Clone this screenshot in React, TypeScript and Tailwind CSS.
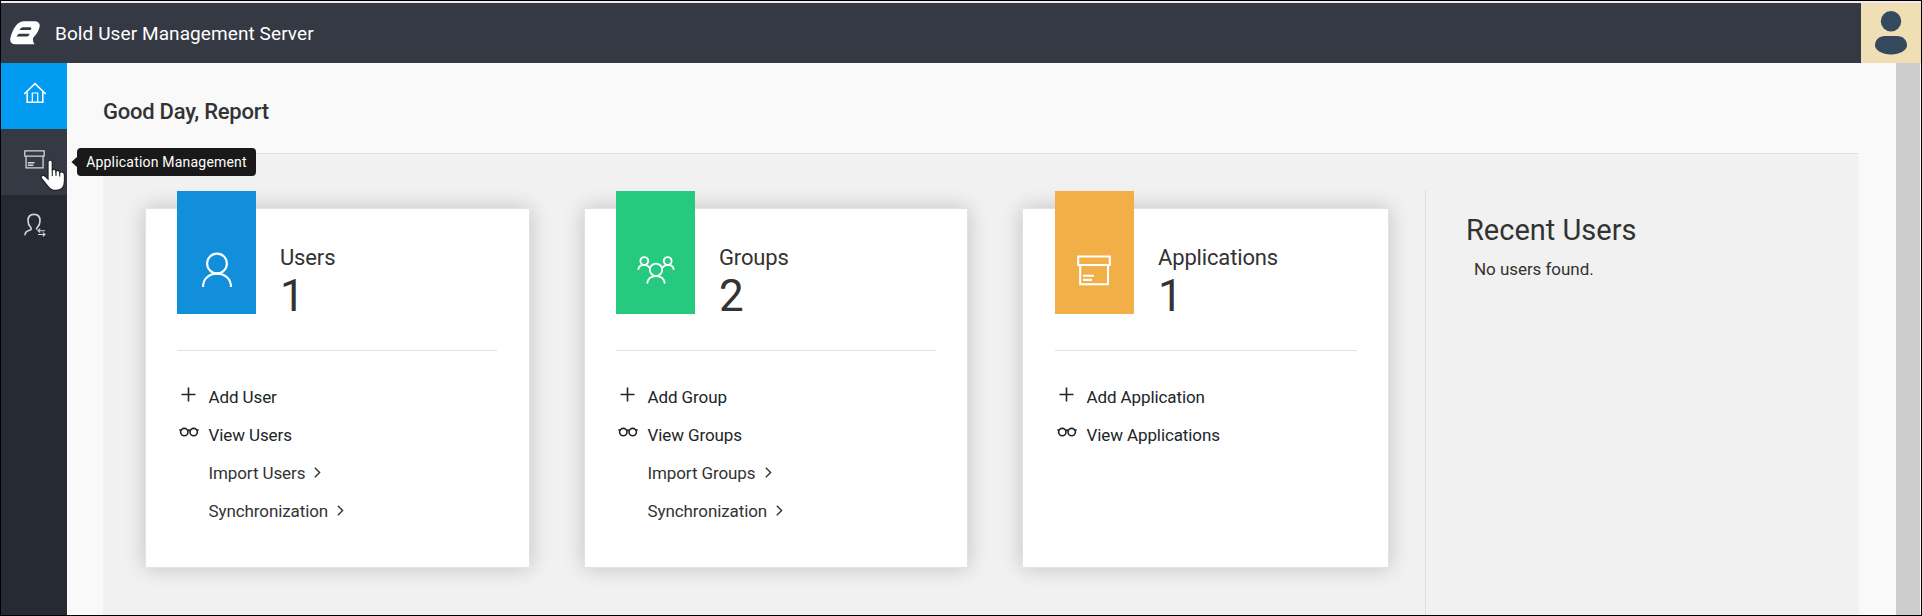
import React from "react";

type Link = { label: string; icon?: "plus" | "view"; arrow?: boolean };

const LogoIcon = () => (
  <svg className="ml-[9px]" width="30" height="24" viewBox="0 0 30 24">
    <path d="M13.5 0.3H24.5C28.6 0.3 30.6 2.8 29.4 6.6 28.4 10.2 26.6 13.6 23.4 16.4 22.6 18.6 23 21 24.6 23.2H5.5C1 23.2-0.6 20.4 0.6 16.2 2.6 8.8 7 0.3 13.5 0.3Z" fill="#fff" />
    <path d="M12.4 6.2H20.2Q21.9 6.2 21.2 7.8L20.7 8.9H9.4Q10.6 6.9 12.4 6.2ZM9 12.8H19.6Q18.9 15.3 17.2 15.5H6.6Q7.4 13.6 9 12.8Z" fill="#353943" />
  </svg>
);

const HomeIcon = () => (
  <svg width="24" height="22" viewBox="0 0 24 22" fill="none" stroke="#fff" strokeWidth="1.6">
    <path d="M1.2 12 12 1.6 22.8 12" />
    <path d="M4.2 9.8V20.2H19.8V9.8" />
    <path d="M9.3 20V11H14.7V20" strokeWidth="1.2" />
  </svg>
);

const BoxIcon = ({ className, stroke }: { className: string; stroke: string }) => (
  <svg className={className} viewBox="0 0 34 31" fill="none" stroke={stroke} strokeWidth="2.1">
    <path d="M1.2 1.5H32.8V10H1.2Z" />
    <path d="M3.2 10V29.2H31V10" />
    <path d="M6 20.8H17M6 24.9H15" />
  </svg>
);

const UserSyncIcon = () => (
  <svg width="22" height="24" viewBox="0 0 22 24" fill="none" stroke="#d6d6d6" strokeWidth="1.6">
    <path d="M1 22.3C1.2 18.8 2.8 18.3 5.6 17.2 7.5 16.4 7.7 15.5 6.6 14.3 4.8 12.4 4 10.3 4 7.8 4 3.6 6.3 1.4 10 1.4S16 3.6 16 7.8C16 10.8 15.1 12.6 13.5 14.3 12.4 15.5 12.4 16 13.2 16.7" />
    <path d="M21 17.7H14M16.2 15.7 14 17.7 16.2 19.6M14 21.5H21M18.8 19.6 21 21.5 18.8 23.4" strokeWidth="1.1" />
  </svg>
);

const UserIcon = () => (
  <svg width="32" height="36" viewBox="0 0 32 36" fill="none" stroke="#fff" strokeWidth="2.1">
    <circle cx="16" cy="11.5" r="9.9" />
    <path d="M2 35C2 27 8 21.6 16 21.6S30 27 30 35" />
  </svg>
);

const GroupIcon = () => (
  <svg width="38" height="28" viewBox="0 0 38 28" fill="none" stroke="#fff" strokeWidth="1.9">
    <circle cx="7.3" cy="5" r="3.9" />
    <circle cx="30.7" cy="5" r="3.9" />
    <circle cx="19" cy="13.8" r="6.2" />
    <path d="M1.3 13.8C1.5 10.7 3.8 8.9 7.1 8.9 9.8 8.9 11.7 10 12.8 12" />
    <path d="M36.7 13.8C36.5 10.7 34.2 8.9 30.9 8.9 28.2 8.9 26.3 10 25.2 12" />
    <path d="M10.2 27.6C10.5 22.8 14 20 19 20S27.5 22.8 27.8 27.6" />
  </svg>
);

const PlusIcon = () => (
  <svg width="15" height="15" viewBox="0 0 15 15" stroke="#212529" strokeWidth="1.6">
    <path d="M7.5 0.5V14.5M0.5 7.5H14.5" />
  </svg>
);

const GlassesIcon = () => (
  <svg width="20" height="10" viewBox="0 0 20 10" fill="none" stroke="#212529" strokeWidth="1.6">
    <circle cx="5.3" cy="5.1" r="3.7" />
    <circle cx="14.7" cy="5.1" r="3.7" />
    <path d="M0.3 3H2.4M17.6 3H19.7M8.4 3.6Q10 2.5 11.6 3.6" />
  </svg>
);

const ChevronIcon = () => (
  <svg width="7" height="11" viewBox="0 0 7 11" fill="none" stroke="#333" strokeWidth="1.4">
    <path d="M0.8 0.8 5.6 5.5 0.8 10.2" />
  </svg>
);

function Card({
  width, color, pad, title, count, icon, links,
}: {
  width: string; color: string; pad: string; title: string; count: string; icon: React.ReactNode; links: Link[];
}) {
  return (
    <section className={`${width} ${pad} h-[360px] shrink-0 border border-[#e3e3e3] bg-white shadow-[0_0_20px_rgba(0,0,0,0.2)]`}>
      <div className="flex h-[142px] border-b border-[#e1e1e1]">
        <div className={`${color} -mt-[18px] flex h-[123px] w-[79px] justify-center pt-[61px]`}>{icon}</div>
        <div className="ml-6 pt-[34px] text-[#333]">
          <h2 className="text-[22px] leading-[30px] tracking-[-0.15px]">{title}</h2>
          <p className="mt-px text-[44px] leading-[44px]">{count}</p>
        </div>
      </div>
      <ul className="pt-[28px]">
        {links.map((l) => (
          <li key={l.label} className={`flex h-[38px] items-center text-[17px] tracking-[-0.1px] ${l.icon ? "text-[#212529]" : "text-[#333]"}`}>
            <span className="flex w-[31.5px] justify-center pr-[8px] pb-[8px]">
              {l.icon === "plus" && <PlusIcon />}
              {l.icon === "view" && <GlassesIcon />}
            </span>
            <span>{l.label}</span>
            {l.arrow && <span className="ml-[9px] pb-[4px]"><ChevronIcon /></span>}
          </li>
        ))}
      </ul>
    </section>
  );
}

export default function App() {
  return (
    <div className="flex h-[616px] w-[1922px] flex-col overflow-hidden border border-black bg-[#f9f9f9] font-['Roboto',sans-serif] text-[#333]">
      <div className="h-[2px] shrink-0 bg-[#f3e9f3]" />
      <header className="flex h-[60px] shrink-0 items-center bg-[#353943]">
        <LogoIcon />
        <h1 className="ml-[15px] pt-[2px] text-[19px] tracking-[0.09px] text-white">Bold User Management Server</h1>
        <div className="ml-auto flex h-[60px] w-[60px] justify-center bg-[#f0dfb5] pt-[8px]">
          <svg width="32" height="44" viewBox="0 0 32 44" fill="#34495e">
            <circle cx="16" cy="10.3" r="10.2" />
            <path d="M10 25H22C28 25 32 29 32 34.5 32 39 25 43.5 16 43.5S0 39 0 34.5C0 29 4 25 10 25Z" />
          </svg>
        </div>
      </header>
      <div className="flex min-h-0 flex-1">
        <nav className="w-[66px] shrink-0 bg-[#262a33]">
          <div className="flex h-[66px] justify-center bg-[#019cf1] pt-[19px] pl-px"><HomeIcon /></div>
          <div className="relative flex h-[66px] justify-center bg-[#353943] pt-[21px] pl-px">
            <BoxIcon className="h-[19px] w-[21px]" stroke="#d6d6d6" />
            <svg className="absolute top-[30px] left-[39px]" width="26" height="33" viewBox="0 0 26 33">
              <path d="M8 3.2C8 0.4 12.3 0.4 12.3 3.2V11.2C13 9.7 16 10 16 12.2 16.8 10.8 19.7 11.3 19.7 13.5 20.8 12.3 24.5 12.6 24.5 16V22C24.5 28.5 21 31.5 15.5 31.5 11.5 31.5 9.7 29.8 7.5 26.8L1.4 19.3C0 16.8 3.2 15.3 5.2 17.2L8 20Z" fill="#fff" stroke="#22252d" strokeWidth="1.3" />
              <path d="M12.3 10V17M16 11.5V17M19.7 13V17.5" stroke="#22252d" strokeWidth="1.1" />
            </svg>
            <div className="absolute top-[19px] left-[76px] z-10 flex h-[28px] w-[179px] items-center justify-center rounded-[4px] bg-[#191919] pt-px text-[14px] tracking-[0.2px] whitespace-nowrap text-white">
              Application Management
              <svg className="absolute top-[8px] -left-[6px]" width="7" height="12" viewBox="0 0 7 12"><path d="M7 0 0.5 6 7 12Z" fill="#191919" /></svg>
            </div>
          </div>
          <div className="flex justify-center pt-[18px] pl-px"><UserSyncIcon /></div>
        </nav>
        <main className="flex min-w-0 flex-1 flex-col pr-[37px] pl-[36px]">
          <div className="flex h-[91px] shrink-0 items-center border-b border-[#e1e1e1] pt-[7px]">
            <p className="text-[22px] font-medium tracking-[-0.25px]">Good Day, Report</p>
          </div>
          <div className="flex min-h-0 flex-1 rounded-t-[4px] bg-[#f1f1f1] pl-[42px]">
            <div className="flex gap-[54px] pt-[54px]">
              <Card width="w-[385px]" pad="pl-[31px] pr-8" color="bg-[#118fdb]" title="Users" count="1" icon={<UserIcon />}
                links={[
                  { label: "Add User", icon: "plus" },
                  { label: "View Users", icon: "view" },
                  { label: "Import Users", arrow: true },
                  { label: "Synchronization", arrow: true },
                ]} />
              <Card width="w-[384px]" pad="px-[31px]" color="bg-[#25ca7e]" title="Groups" count="2" icon={<span className="pt-[4px]"><GroupIcon /></span>}
                links={[
                  { label: "Add Group", icon: "plus" },
                  { label: "View Groups", icon: "view" },
                  { label: "Import Groups", arrow: true },
                  { label: "Synchronization", arrow: true },
                ]} />
              <Card width="w-[367px]" pad="pl-8 pr-[31px]" color="bg-[#f2af48]" title="Applications" count="1" icon={<BoxIcon className="mt-[3px] mr-px h-[31px] w-[34px]" stroke="#fff" />}
                links={[
                  { label: "Add Application", icon: "plus" },
                  { label: "View Applications", icon: "view" },
                ]} />
            </div>
            <aside className="mt-[36px] ml-[36px] flex-1 border-l border-[#dedede] pt-[20px] pl-[40px]">
              <h2 className="text-[29px] leading-[40px]">Recent Users</h2>
              <p className="mt-[7px] pl-2 text-[17px] leading-[24px] tracking-[-0.05px]">No users found.</p>
            </aside>
          </div>
        </main>
        <div className="w-[25px] shrink-0 border-r border-[#f5f5f5] bg-[#cdcdcd]" />
      </div>
    </div>
  );
}
